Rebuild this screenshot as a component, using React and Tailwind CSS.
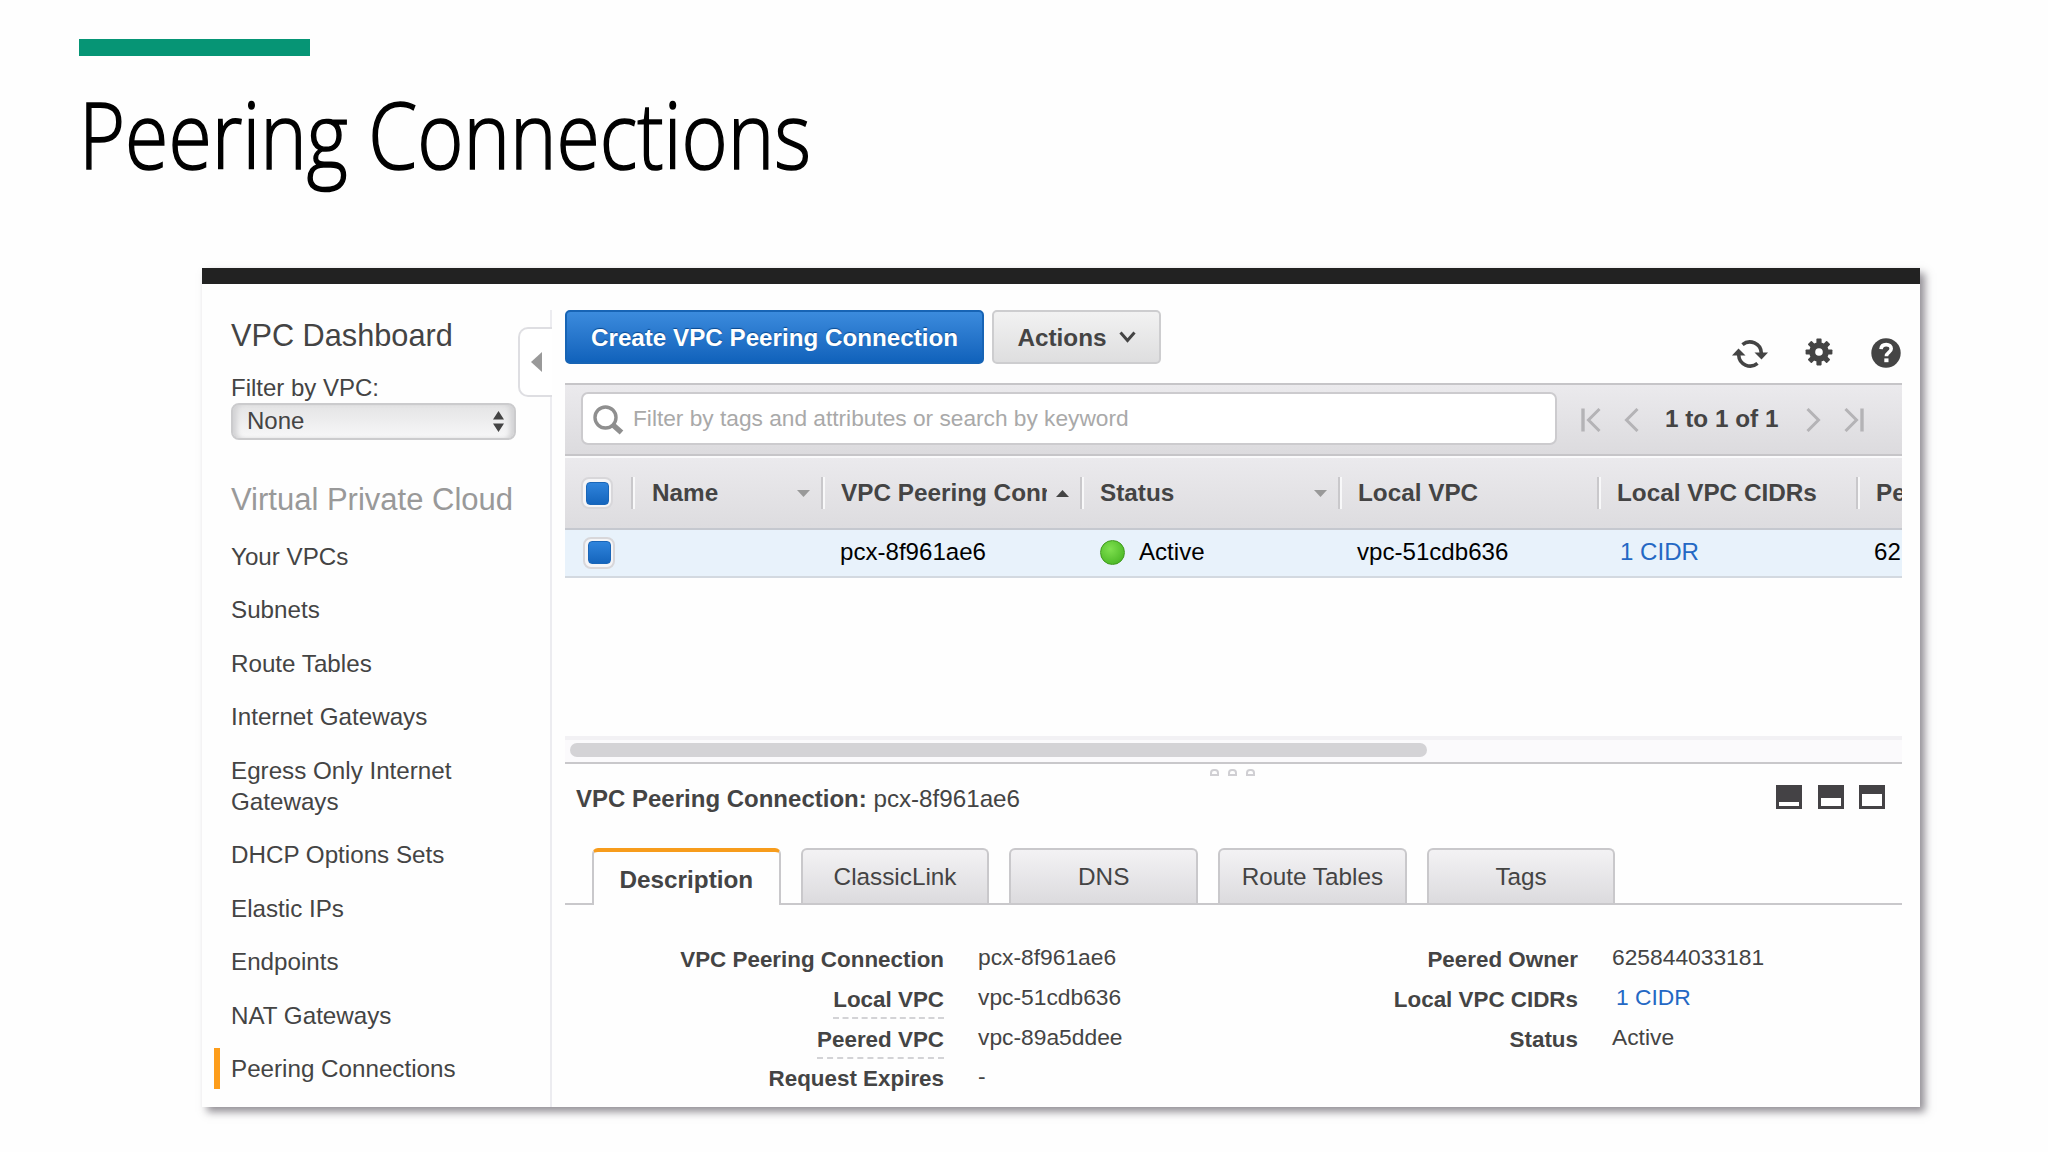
import clsx from 'clsx';

const MENU = [
  'Your VPCs',
  'Subnets',
  'Route Tables',
  'Internet Gateways',
  'Egress Only Internet Gateways',
  'DHCP Options Sets',
  'Elastic IPs',
  'Endpoints',
  'NAT Gateways',
  'Peering Connections',
];

const TABS = ['Description', 'ClassicLink', 'DNS', 'Route Tables', 'Tags'];

const DETAILS_LEFT = [
  { label: 'VPC Peering Connection', value: 'pcx-8f961ae6' },
  { label: 'Local VPC', value: 'vpc-51cdb636', hint: true },
  { label: 'Peered VPC', value: 'vpc-89a5ddee', hint: true },
  { label: 'Request Expires', value: '-' },
];

const DETAILS_RIGHT = [
  { label: 'Peered Owner', value: '625844033181' },
  { label: 'Local VPC CIDRs', value: '1 CIDR', link: true },
  { label: 'Status', value: 'Active' },
];

function RefreshIcon() {
  return (
    <svg width="36" height="30" viewBox="0 0 36 30" fill="none" stroke="#444" strokeWidth="3.6">
      <path d="M10.5 5.6A11.5 11.5 0 0 1 29.3 14" />
      <path d="M25.5 24.4A11.5 11.5 0 0 1 6.7 16" />
      <path d="M22.5 13.5h13.5L29.5 20.5z" fill="#444" stroke="none" />
      <path d="M0 16.5h13.5L6.5 9.5z" fill="#444" stroke="none" />
    </svg>
  );
}

function GearIcon() {
  return (
    <svg width="28" height="28" viewBox="-14 -14 28 28">
      <g fill="#444">
        {[0, 45, 90, 135].map((a) => (
          <rect key={a} x="-2.6" y="-13.4" width="5.2" height="26.8" rx="0.8" transform={`rotate(${a})`} />
        ))}
        <circle r="9.8" />
      </g>
      <circle r="3.8" fill="#fff" />
    </svg>
  );
}

function HelpIcon() {
  return (
    <svg width="30" height="30" viewBox="0 0 30 30" fill="none">
      <circle cx="15" cy="15" r="14.7" fill="#444" />
      <path d="M10 11.2C10.3 7.8 12.4 6.6 15.2 6.6c3 0 5 1.6 5 4.2 0 3.6-4.8 3.6-4.8 7.4" stroke="#fff" strokeWidth="3.6" />
      <rect x="13.3" y="20.4" width="4.2" height="3.8" fill="#fff" />
    </svg>
  );
}

function SearchIcon() {
  return (
    <svg width="31" height="30" viewBox="0 0 31 30" fill="none" stroke="#8f8f8f">
      <circle cx="12.5" cy="12.5" r="10.5" strokeWidth="3.4" />
      <path d="M20 20l8.5 7.5" strokeWidth="5.4" />
    </svg>
  );
}

function Chevron({ flip, bar }) {
  return (
    <svg
      width="20"
      height="24"
      viewBox="0 0 20 24"
      fill="none"
      stroke="#b4b3b6"
      strokeWidth="3"
      className={flip ? '-scale-x-100' : ''}
    >
      <path d="M18.5 1L7.5 12l11 11" />
      {bar ? <path d="M2 0.5v23" strokeWidth="3.4" /> : null}
    </svg>
  );
}

function SortArrow({ up }) {
  return (
    <svg width="13" height="7" viewBox="0 0 13 7" className="mr-[11px] shrink-0">
      {up ? <path d="M0 7h13L6.5 0z" fill="#444" /> : <path d="M0 0h13L6.5 7z" fill="#999" />}
    </svg>
  );
}

function Checkbox() {
  return (
    <span className="flex size-8 shrink-0 items-center justify-center rounded-[8px] border-2 border-[#d8d7da] bg-[#f5f5f7]">
      <span className="size-[23px] rounded-[4px] border border-[#1a66b8] bg-linear-to-b from-[#2f84dc] to-[#1465bd]" />
    </span>
  );
}

function HeaderCell({ children, className, sort }) {
  return (
    <div className={clsx('flex h-8 items-center border-l-2 border-[#c9c8cb] shadow-[inset_2px_0_0_#f8f8f9]', className)}>
      <span className="flex-1 overflow-hidden whitespace-nowrap">{children}</span>
      {sort ? <SortArrow up={sort === 'up'} /> : null}
    </div>
  );
}

// Each icon is a dark window with a light lower pane of the given height
function PaneIcon({ pane }) {
  return (
    <svg width="26" height="24" viewBox="0 0 26 24">
      <rect width="26" height="24" fill="#444245" />
      <rect x="3" y={21 - pane} width="20" height={pane} fill="#fff" />
    </svg>
  );
}

function DetailList({ rows, className }) {
  return (
    <dl className={clsx('flex flex-col', className)}>
      {rows.map((row) => (
        <div key={row.label} className="flex h-[39.8px] gap-[34px] leading-[30px]">
          <dt className="flex flex-1 justify-end pt-[3px] text-[22.4px] font-bold">
            <span className={clsx('h-[34px]', row.hint && 'border-b-2 border-dashed border-[#d3d3d6]')}>{row.label}</span>
          </dt>
          <dd className={clsx('w-[190px] text-[22.8px]', row.link && 'pl-1 text-[#2468c4]')}>{row.value}</dd>
        </div>
      ))}
    </dl>
  );
}

function Sidebar() {
  return (
    <aside className="relative flex w-[350px] shrink-0 flex-col pt-[26px]">
      <div className="flex-1 border-r-2 border-[#ececf0] pl-[29px]">
        <h2 className="pt-[8px] text-[30.7px] leading-[36px]">VPC Dashboard</h2>
        <p className="mt-[18px] text-[24px] leading-[32px]">Filter by VPC:</p>
        <div className="-mt-px flex h-[37px] w-[285px] items-center justify-between rounded-[8px] border-2 border-[#cbcbcd] bg-linear-to-b from-[#e4e4e5] to-[#f7f7f8] pr-[10px] pl-[14px] shadow-[inset_6px_0_5px_-2px_#d2d2d4,inset_-6px_0_5px_-2px_#d2d2d4]">
          <span className="-mt-[2px] text-[24px] leading-[30px]">None</span>
          <svg width="11" height="21" viewBox="0 0 11 21" fill="#444">
            <path d="M0 8.5h11L5.5 0zM0 12.5h11L5.5 21z" />
          </svg>
        </div>
        <h3 className="mt-[42px] text-[31px] leading-[36px] text-[#999]">Virtual Private Cloud</h3>
        <ul className="mt-[23px] flex flex-col gap-[22px]">
          {MENU.map((item) => (
            <li key={item} className="relative w-[250px] text-[24.2px] leading-[31.4px]">
              {item === 'Peering Connections' ? (
                <span className="absolute -top-[5px] -left-[17px] h-[41px] w-[6px] bg-[#fd9d1b]" />
              ) : null}
              {item}
            </li>
          ))}
        </ul>
      </div>
      <div className="absolute top-[43px] right-0 flex h-[70px] w-[34px] items-center justify-center rounded-l-[10px] border-2 border-r-0 border-[#dedee2] bg-white pl-px">
        <svg width="11" height="20" viewBox="0 0 11 20" fill="#999">
          <path d="M11 0v20L0 10z" />
        </svg>
      </div>
    </aside>
  );
}

function Toolbar() {
  return (
    <div className="flex h-[99px] items-start pt-[26px] font-bold">
      <button className="h-[54px] w-[419px] rounded-[5px] border-2 border-[#1764b5] bg-linear-to-b from-[#3b8bdd] to-[#1062bb] pt-[2px] text-[24.2px] text-white text-shadow-[0_-1px_1px_#0a4a90]">
        Create VPC Peering Connection
      </button>
      <button className="ml-[8px] flex h-[54px] w-[169px] items-center justify-center gap-3 rounded-[5px] border-2 border-[#cdcdcf] bg-linear-to-b from-[#f2f2f2] to-[#dededf] pt-[2px]">
        Actions
        <svg width="17" height="12" viewBox="0 0 17 12" fill="none" stroke="#444" strokeWidth="3" className="-mt-[3px]">
          <path d="M1.5 1.5l7 8 7-8" />
        </svg>
      </button>
      <div className="mt-[26px] mr-px ml-auto flex items-center">
        <div className="mt-[3px] mr-[37px]"><RefreshIcon /></div>
        <div className="-mt-[2px] mr-[38px]"><GearIcon /></div>
        <HelpIcon />
      </div>
    </div>
  );
}

function ConnectionTable() {
  return (
    <div className="overflow-hidden">
      <div className="flex h-[73px] items-center border-y-2 border-[#c6c5c8] bg-linear-to-b from-[#ebeaed] to-[#dcdbde] pl-[16px]">
        <div className="mt-[-2px] flex h-[53px] w-[976px] shrink-0 items-center rounded-[7px] border-2 border-[#cccbce] bg-white pl-[10px] text-[22.7px] text-[#a9a9a9]">
          <span className="mt-[2px]"><SearchIcon /></span>
          <span className="ml-[9px]">Filter by tags and attributes or search by keyword</span>
        </div>
        <div className="flex flex-1 items-center pl-[24px] font-bold">
          <Chevron bar />
          <span className="ml-[18px]"><Chevron /></span>
          <span className="ml-[26px] whitespace-nowrap">1 to 1 of 1</span>
          <span className="ml-[28px]"><Chevron flip /></span>
          <span className="ml-[18px]"><Chevron flip bar /></span>
        </div>
      </div>

      <div className="flex h-[74px] items-center border-t-2 border-b-2 border-t-[#fafafb] border-b-[#c5c8cf] bg-linear-to-b from-[#ebeaed] to-[#dddcdf] pl-[16px] font-bold">
        <Checkbox />
        <HeaderCell className="ml-[18px] w-[190px] shrink-0 pl-[19px]" sort="down">Name</HeaderCell>
        <HeaderCell className="w-[259px] shrink-0 pl-[18px]" sort="up">
          <span className="block w-[206px] overflow-hidden">VPC Peering Conn</span>
        </HeaderCell>
        <HeaderCell className="w-[258px] shrink-0 pl-[18px]" sort="down">Status</HeaderCell>
        <HeaderCell className="w-[259px] shrink-0 pl-[18px]">Local VPC</HeaderCell>
        <HeaderCell className="w-[259px] shrink-0 pl-[18px]">Local VPC CIDRs</HeaderCell>
        <HeaderCell className="w-[200px] shrink-0 pl-[18px]">Pe</HeaderCell>
      </div>

      <div className="flex h-[48px] items-center border-b-2 border-[#d3d9e0] bg-[#e8f2fb] pb-px pl-[18px] text-[24.1px] whitespace-nowrap text-black">
        <Checkbox />
        <span className="ml-[225px] w-[260px] shrink-0">pcx-8f961ae6</span>
        <span className="flex w-[257px] shrink-0 items-center gap-[14px]">
          <span className="size-[25px] rounded-full border border-[#3f9a1c] bg-[radial-gradient(circle_at_40%_35%,#7fe04f,#3fae1c)]" />
          Active
        </span>
        <span className="w-[263px] shrink-0">vpc-51cdb636</span>
        <span className="w-[254px] shrink-0 text-[#2468c4]">1 CIDR</span>
        <span>62</span>
      </div>
    </div>
  );
}

function DetailPane() {
  return (
    <section>
      <div className="flex h-[28px] items-center border-t-4 border-b-2 border-t-[#f2f1f4] border-b-[#c9c8cb] bg-[#fbfafc] pb-[2px] pl-[5px]">
        <div className="h-[14px] w-[857px] rounded-full bg-[#d4d3d6]" />
      </div>
      <div className="flex h-[12px] items-end justify-center gap-[9px] pr-[3px]">
        {[0, 1, 2].map((i) => (
          <span key={i} className="h-[7px] w-[9px] rounded-t-[4px] border-2 border-[#d0cfd3]" />
        ))}
      </div>
      <div className="flex h-[72px] items-start justify-between pr-[17px] pl-[11px]">
        <p className="pt-[7px] text-[24.2px] leading-[32px]">
          <span className="text-[24px] font-bold">VPC Peering Connection:</span> pcx-8f961ae6
        </p>
        <div className="mt-[9px] flex gap-[15.5px]">
          <PaneIcon pane={4} />
          <PaneIcon pane={8} />
          <PaneIcon pane={12} />
        </div>
      </div>

      <div className="flex h-[57px] gap-[20px] border-b-2 border-[#c9c8cb] pl-[27px]">
        {TABS.map((tab, i) => (
          <div
            key={tab}
            className={clsx(
              'flex w-[188.7px] items-center justify-center rounded-t-[6px] border-2 border-b-0 border-[#c9c8cb]',
              i === 0
                ? '-mb-[2px] border-t-4 border-t-[#f79c1c] bg-[#fefefe] pt-[3px] font-bold'
                : 'bg-linear-to-b from-[#f3f2f4] to-[#dcdbde] pt-px',
            )}
          >
            {tab}
          </div>
        ))}
      </div>

      <div className="flex pt-[37px] pl-px">
        <DetailList rows={DETAILS_LEFT} className="w-[602px]" />
        <DetailList rows={DETAILS_RIGHT} className="w-[634px]" />
      </div>
    </section>
  );
}

export default function App() {
  return (
    <div className="h-[1152px] w-[2048px] overflow-hidden bg-[#fefefe] pt-[39px]">
      <header className="h-[229px] pl-[79px]">
        <div className="h-[17px] w-[231px] bg-[#069575]" />
        <h1 className="mt-[18px] w-max origin-left scale-x-[0.857] font-['Open_Sans',sans-serif] text-[92px] leading-[120px] font-light whitespace-nowrap text-black [-webkit-text-stroke:1.6px_black]">
          Peering Connections
        </h1>
      </header>

      <main className="ml-[202px] flex h-[839px] w-[1718px] flex-col border-t-[16px] border-[#222] bg-[#fefefe] font-['Liberation_Sans',Arial,sans-serif] text-[24.3px] text-[#444] shadow-[5px_5px_8px_rgba(60,55,65,0.55)]">
        <div className="flex flex-1">
          <Sidebar />
          <div className="ml-[13px] flex w-[1337px] flex-col">
            <Toolbar />
            <ConnectionTable />
            <div className="h-[158px]" />
            <DetailPane />
          </div>
        </div>
      </main>
    </div>
  );
}
